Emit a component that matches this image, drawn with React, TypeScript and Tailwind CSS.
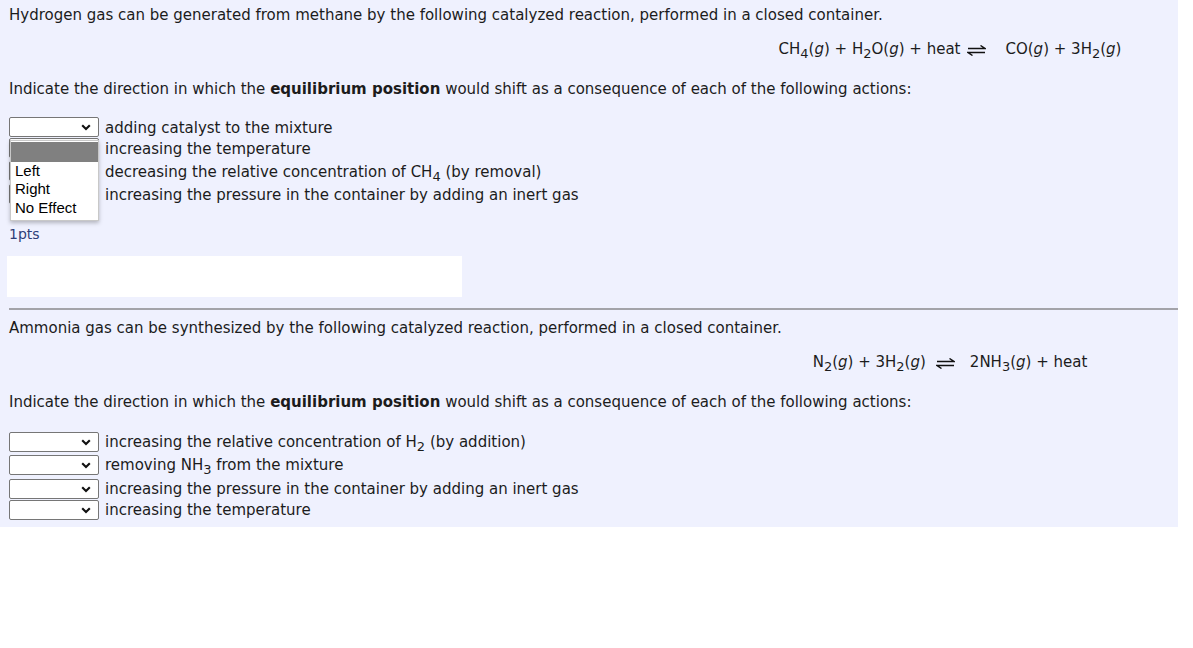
import React from "react";

const font = { fontFamily: '"DejaVu Sans", Verdana, sans-serif' };

function Chevron() {
  return (
    <svg width="10" height="7" viewBox="0 0 10 7" className="absolute right-[7px] top-[6px]">
      <path d="M1.2 1.2 L5 5 L8.8 1.2" fill="none" stroke="#111" strokeWidth="2.1" />
    </svg>
  );
}

function Sel() {
  return (
    <div className="relative w-[90px] h-[20px] shrink-0 bg-white border border-[#767676] rounded-[2px]">
      <Chevron />
    </div>
  );
}

function Eq({ l, r }: { l: number; r: number }) {
  return (
    <svg width="19" height="11" viewBox="0 0 19 11" className="mt-[6px] shrink-0" style={{ marginLeft: l, marginRight: r }}>
      <path d="M1 3.5 H18 L13.5 0.5" fill="none" stroke="#111" strokeWidth="1.4" />
      <path d="M18 7.5 H1 L5.5 10.5" fill="none" stroke="#111" strokeWidth="1.4" />
    </svg>
  );
}

const G = () => <i>g</i>;
const S = ({ c }: { c: string }) => <sub className="text-[13px] bottom-[-0.3em]">{c}</sub>;

function Row({ h, t = 0, children }: { h: number; t?: number; children: React.ReactNode }) {
  return (
    <div className="flex items-start" style={{ height: h }}>
      <Sel />
      <div className="ml-[6px] leading-[20px] whitespace-nowrap" style={{ marginTop: t }}>
        {children}
      </div>
    </div>
  );
}

export default function App() {
  return (
    <div className="w-[1193px] h-[648px] bg-white text-[15px] text-[#1c1c1c]" style={font}>
      <div className="w-[1178px] bg-[#eff1fe] pt-[5px] pb-[6px]">
        <div className="pl-[9px] h-[20px] leading-[20px] whitespace-nowrap">
          Hydrogen gas can be generated from methane by the following catalyzed reaction, performed in a closed container.
        </div>
        <div className="mt-[14px] h-[20px] flex justify-end">
          <div className="w-[456px] flex justify-center leading-[20px] whitespace-nowrap">
            <span>
              CH<S c="4" />(<G />) + H<S c="2" />O(<G />) + heat
            </span>
            <Eq l={7} r={19} />
            <span>
              CO(<G />) + 3H<S c="2" />(<G />)
            </span>
          </div>
        </div>
        <div className="mt-[20px] pl-[9px] h-[20px] leading-[20px] whitespace-nowrap">
          Indicate the direction in which the <b>equilibrium position</b> would shift as a consequence of each of the following actions:
        </div>
        <div className="relative mt-[18px] pl-[9px]">
          <Row h={21} t={1}>adding catalyst to the mixture</Row>
          <Row h={23} t={1}>increasing the temperature</Row>
          <Row h={23} t={1}>
            decreasing the relative concentration of CH<S c="4" /> (by removal)
          </Row>
          <Row h={21} t={1}>increasing the pressure in the container by adding an inert gas</Row>
          <div
            className="absolute left-[10px] top-[23px] w-[89px] bg-white border border-[#c8c8c8] shadow-[0_2px_4px_rgba(0,0,0,0.25)] pt-[1px] pb-[3px] text-[15px] text-black"
            style={{ fontFamily: '"Liberation Sans", Arial, sans-serif' }}
          >
            <div className="h-[20px] bg-[#808080]" />
            <div className="h-[18px] leading-[18px] pl-[4px]">Left</div>
            <div className="h-[18px] leading-[18px] pl-[4px]">Right</div>
            <div className="h-[19px] leading-[19px] pl-[4px]">No Effect</div>
          </div>
        </div>
        <div className="mt-[19px] pl-[9px] h-[20px] leading-[20px] text-[14px] text-[#2e3f78]">1pts</div>
        <div className="mt-[12px] ml-[7px] w-[455px] h-[41px] bg-white" />
        <div className="mt-[11px] ml-[9px] border-t-2 border-[#a3a3a9]" />
        <div className="mt-[8px] pl-[9px] h-[20px] leading-[20px] whitespace-nowrap">
          Ammonia gas can be synthesized by the following catalyzed reaction, performed in a closed container.
        </div>
        <div className="mt-[14px] h-[20px] flex justify-end">
          <div className="w-[456px] flex justify-center leading-[20px] whitespace-nowrap">
            <span>
              N<S c="2" />(<G />) + 3H<S c="2" />(<G />)
            </span>
            <Eq l={10} r={15} />
            <span>
              2NH<S c="3" />(<G />) + heat
            </span>
          </div>
        </div>
        <div className="mt-[20px] pl-[9px] h-[20px] leading-[20px] whitespace-nowrap">
          Indicate the direction in which the <b>equilibrium position</b> would shift as a consequence of each of the following actions:
        </div>
        <div className="mt-[20px] pl-[9px]">
          <Row h={23}>
            increasing the relative concentration of H<S c="2" /> (by addition)
          </Row>
          <Row h={24}>
            removing NH<S c="3" /> from the mixture
          </Row>
          <Row h={21}>increasing the pressure in the container by adding an inert gas</Row>
          <Row h={21}>increasing the temperature</Row>
        </div>
      </div>
    </div>
  );
}
